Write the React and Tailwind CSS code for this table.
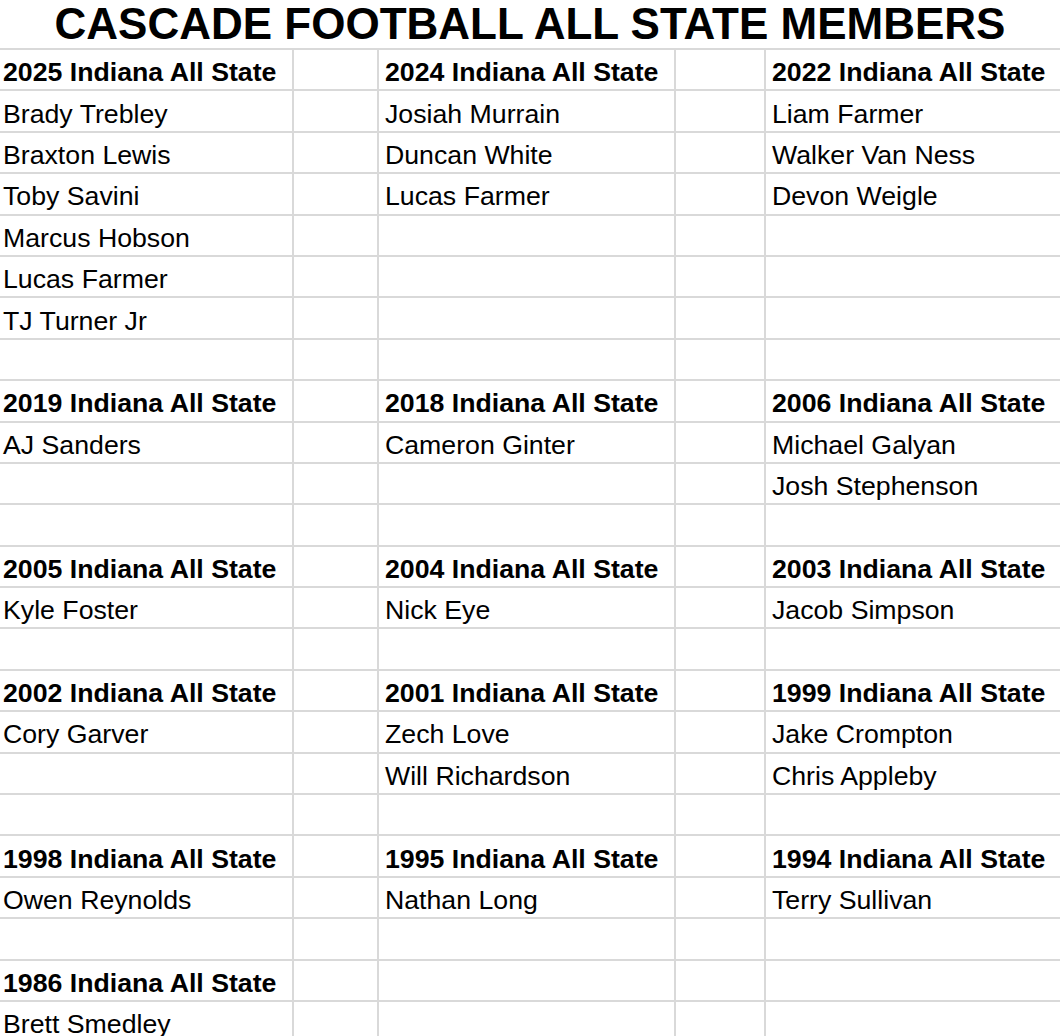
import React from "react";

const blocks = [
  [
    ["2025 Indiana All State", "Brady Trebley", "Braxton Lewis", "Toby Savini", "Marcus Hobson", "Lucas Farmer", "TJ Turner Jr", ""],
    ["2024 Indiana All State", "Josiah Murrain", "Duncan White", "Lucas Farmer", "", "", "", ""],
    ["2022 Indiana All State", "Liam Farmer", "Walker Van Ness", "Devon Weigle", "", "", "", ""],
  ],
  [
    ["2019 Indiana All State", "AJ Sanders", "", ""],
    ["2018 Indiana All State", "Cameron Ginter", "", ""],
    ["2006 Indiana All State", "Michael Galyan", "Josh Stephenson", ""],
  ],
  [
    ["2005 Indiana All State", "Kyle Foster", ""],
    ["2004 Indiana All State", "Nick Eye", ""],
    ["2003 Indiana All State", "Jacob Simpson", ""],
  ],
  [
    ["2002 Indiana All State", "Cory Garver", "", ""],
    ["2001 Indiana All State", "Zech Love", "Will Richardson", ""],
    ["1999 Indiana All State", "Jake Crompton", "Chris Appleby", ""],
  ],
  [
    ["1998 Indiana All State", "Owen Reynolds", ""],
    ["1995 Indiana All State", "Nathan Long", ""],
    ["1994 Indiana All State", "Terry Sullivan", ""],
  ],
  [
    ["1986 Indiana All State", "Brett Smedley"],
    ["", ""],
    ["", ""],
  ],
];

function Cell({ text, bold, last, first }) {
  return (
    <div
      className={`h-[41.4px] flex items-end ${first ? "pl-[3px]" : "pl-[6px]"} pb-[3.5px] overflow-hidden whitespace-nowrap border-b-2 border-[#d9d9d9] ${last ? "" : "border-r-2"} text-[26.7px] leading-[26.7px] text-black ${bold ? "font-bold" : ""}`}
    >
      {text}
    </div>
  );
}

export default function App() {
  const rows = [];
  blocks.forEach((b) => {
    const n = b[0].length;
    for (let i = 0; i < n; i++) {
      rows.push({ cells: [b[0][i], b[1][i], b[2][i]], header: i === 0 && b[0][0] !== "" });
    }
  });
  return (
    <div className="w-[1060px] h-[1036px] overflow-hidden bg-white" style={{ fontFamily: '"Liberation Sans", Arial, sans-serif' }}>
      <div className="h-[48px] flex items-center justify-center text-[44px] font-bold leading-none text-black">
        CASCADE FOOTBALL ALL STATE MEMBERS
      </div>
      <div className="grid grid-cols-[294px_85px_297px_90px_1fr] border-t-2 border-[#d9d9d9]">
        {rows.map((r, i) => (
          <React.Fragment key={i}>
            <Cell text={r.cells[0]} bold={r.header} first />
            <Cell text="" />
            <Cell text={r.cells[1]} bold={r.header} />
            <Cell text="" />
            <Cell text={r.cells[2]} bold={r.header} last />
          </React.Fragment>
        ))}
      </div>
    </div>
  );
}
